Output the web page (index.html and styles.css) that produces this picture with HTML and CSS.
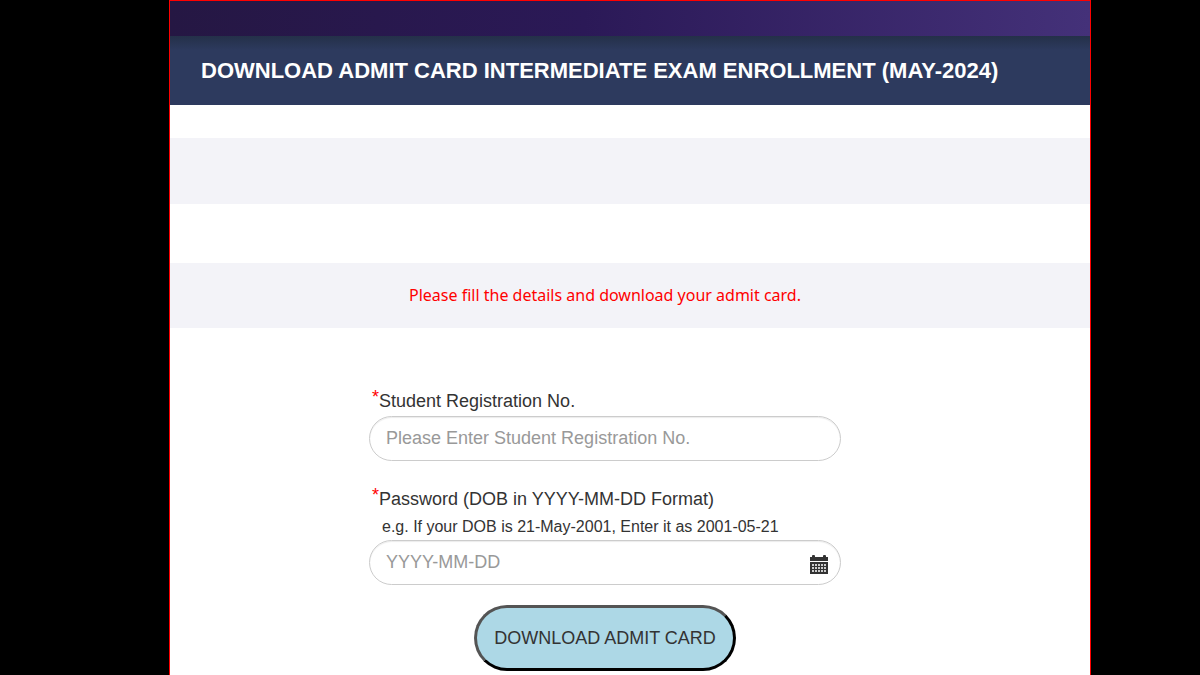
FILE: index.html
```html
<!DOCTYPE html>
<html lang="en">
<head>
    <meta charset="UTF-8">
    <meta name="viewport" content="width=device-width, initial-scale=1.0">
    <title>Download Admit Card</title>
    <link rel="stylesheet" href="styles.css">
</head>
<body>
    <div class="page">
        <div class="top-strip"></div>
        <header class="page-header">
            <h1>DOWNLOAD ADMIT CARD INTERMEDIATE EXAM ENROLLMENT (MAY-2024)</h1>
        </header>
        <div class="band band-empty"></div>
        <div class="band">
            <p class="message">Please fill the details and download your admit card.</p>
        </div>
        <form class="admit-form" action="">
            <div class="form-group">
                <label for="reg_no"><span class="required">*</span>Student Registration No.</label>
                <input type="text" id="reg_no" name="reg_no" placeholder="Please Enter Student Registration No." required>
            </div>
            <div class="form-group">
                <label for="dob"><span class="required">*</span>Password (DOB in YYYY-MM-DD Format)</label>
                <p class="hint" id="dob_hint">e.g. If your DOB is 21-May-2001, Enter it as 2001-05-21</p>
                <div class="input-wrap">
                    <input type="text" id="dob" name="dob" placeholder="YYYY-MM-DD" aria-describedby="dob_hint" required>
                    <svg class="calendar" viewBox="0 0 18 19" aria-hidden="true">
                        <path fill="#333" d="M0 2h2V1q0-1 1-1h1q1 0 1 1v1h8V1q0-1 1-1h1q1 0 1 1v1h2v4H0z"/>
                        <path fill="#333" d="M0 7h18v12H0z"/>
                        <path stroke="#ccc" stroke-width="2" stroke-dasharray="2 1" fill="none" d="M2 10h14M2 13h14M2 16h14"/>
                    </svg>
                </div>
            </div>
            <button type="submit">DOWNLOAD ADMIT CARD</button>
        </form>
    </div>
</body>
</html>
```
FILE: styles.css
```css
* {
    box-sizing: border-box;
}
body {
    margin: 0;
    padding: 0 109px 0 169px;
    background-color: #000;
    font-family: "Liberation Sans", Arial, sans-serif;
    color: #333;
}
.page {
    min-height: 100vh;
    background-color: #fff;
    border: 1px solid #f00;
    border-bottom: none;
}
.top-strip {
    height: 35px;
    background: linear-gradient(to right, #251743, #2b1957 45%, #443179);
}
.page-header {
    padding: 21px 31px 20px;
    background: linear-gradient(#243049, #2d3a5e 14px);
}
.page-header h1 {
    margin: 0;
    font-size: 22px;
    line-height: 28px;
    color: #fff;
}
.band {
    min-height: 65px;
    padding: 20px 50px 20px 0;
    background-color: #f3f3f8;
}
.band-empty {
    margin: 33px 0 59px;
    min-height: 66px;
}
.message {
    margin: 0;
    font-family: "Noto Sans", "Open Sans", sans-serif;
    font-size: 16px;
    line-height: 25px;
    text-align: center;
    color: #f00;
}
.admit-form {
    display: flex;
    flex-direction: column;
    align-items: center;
    padding: 58px 50px 4px 0;
}
.form-group {
    width: 100%;
    max-width: 472px;
}
.form-group + .form-group {
    margin-top: 23px;
}
.form-group label {
    display: block;
    padding-left: 3px;
    font-size: 18px;
    line-height: 30px;
}
.required {
    color: #f00;
    vertical-align: 4px;
    line-height: 1;
}
.hint {
    margin: 0;
    padding-left: 13px;
    font-size: 16px;
    line-height: 26px;
}
.form-group input {
    display: block;
    width: 100%;
    height: 45px;
    padding: 0 16px;
    border: 1px solid #ccc;
    border-radius: 23px;
    box-shadow: inset 0 1px 1px rgba(0, 0, 0, 0.08);
    font-family: inherit;
    font-size: 18px;
    color: #333;
}
.form-group input::placeholder {
    color: #999;
    opacity: 1;
}
.input-wrap {
    position: relative;
}
.calendar {
    position: absolute;
    top: 15px;
    right: 13px;
    width: 18px;
    height: 19px;
}
.admit-form button {
    margin-top: 20px;
    padding: 15px 17px;
    border: 3px outset #000;
    border-radius: 33px;
    background-color: lightblue;
    font-family: inherit;
    font-size: 18px;
    line-height: 30px;
    color: #333;
    cursor: pointer;
}
```
